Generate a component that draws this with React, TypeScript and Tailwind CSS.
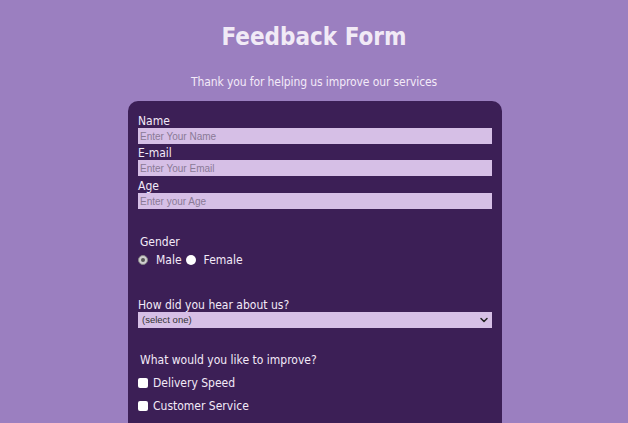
import { ChevronDown } from "lucide-react";

const font = { fontFamily: '"DejaVu Sans Condensed", "DejaVu Sans", sans-serif' };

function Field({ label, placeholder, labelH }: { label: string; placeholder: string; labelH: string }) {
  return (
    <div>
      <div className={`${labelH} flex items-end text-[12px] leading-[14px] text-[#f3eaf8]`}>{label}</div>
      <div className="h-[16px] bg-[#d6bfe6] pl-[2px] flex items-center text-[10px] text-[#8a7a96] font-['Liberation_Sans',sans-serif]">
        {placeholder}
      </div>
    </div>
  );
}

export default function App() {
  return (
    <div className="min-h-[423px] h-[423px] overflow-hidden bg-[#9b7fc0]" style={font}>
      <h1 className="pt-[22px] h-[54px] text-center text-[24px] leading-[30px] font-bold text-[#f1eaf6]">
        Feedback Form
      </h1>
      <p className="mt-[20px] text-center text-[12px] leading-[16px] text-[#f3eaf8] tracking-[-0.1px]">
        Thank you for helping us improve our services
      </p>
      <div className="ml-[128px] mt-[11px] w-[374px] h-[340px] rounded-t-[10px] bg-[#3c1f56] pt-[11px] px-[10px]">
        <Field label="Name" placeholder="Enter Your Name" labelH="h-[16px]" />
        <Field label="E-mail" placeholder="Enter Your Email" labelH="h-[16px]" />
        <Field label="Age" placeholder="Enter your Age" labelH="h-[17px]" />

        <div className="mt-[26px] pl-[2px] text-[12px] leading-[14px] text-[#f3eaf8]">Gender</div>
        <div className="mt-[4px] flex items-center h-[14px] text-[12px] text-[#f3eaf8]">
          <span className="w-[10px] h-[10px] rounded-full bg-[#cfcfcf] border border-[#888] flex items-center justify-center">
            <span className="w-[4px] h-[4px] rounded-full bg-[#555]" />
          </span>
          <span className="ml-[8px]">Male</span>
          <span className="ml-[4px] w-[10px] h-[10px] rounded-full bg-white" />
          <span className="ml-[8px]">Female</span>
        </div>

        <div className="mt-[31px] text-[12px] leading-[14px] text-[#f3eaf8]">How did you hear about us?</div>
        <div className="h-[16px] bg-[#d6bfe6] pl-[4px] pr-[2px] flex items-center justify-between text-[9.5px] text-[#333] font-['Liberation_Sans',sans-serif]">
          <span>(select one)</span>
          <ChevronDown className="w-[12px] h-[12px] text-[#222]" strokeWidth={3} />
        </div>

        <div className="mt-[25px] pl-[2px] text-[12px] leading-[14px] text-[#f3eaf8]">What would you like to improve?</div>
        <div className="mt-[9px] flex flex-col gap-[9px] text-[12px] leading-[14px] text-[#f3eaf8]">
          <label className="flex items-center h-[14px]">
            <span className="w-[10px] h-[10px] rounded-[2px] bg-white" />
            <span className="ml-[5px]">Delivery Speed</span>
          </label>
          <label className="flex items-center h-[14px]">
            <span className="w-[10px] h-[10px] rounded-[2px] bg-white" />
            <span className="ml-[5px]">Customer Service</span>
          </label>
        </div>
      </div>
    </div>
  );
}
